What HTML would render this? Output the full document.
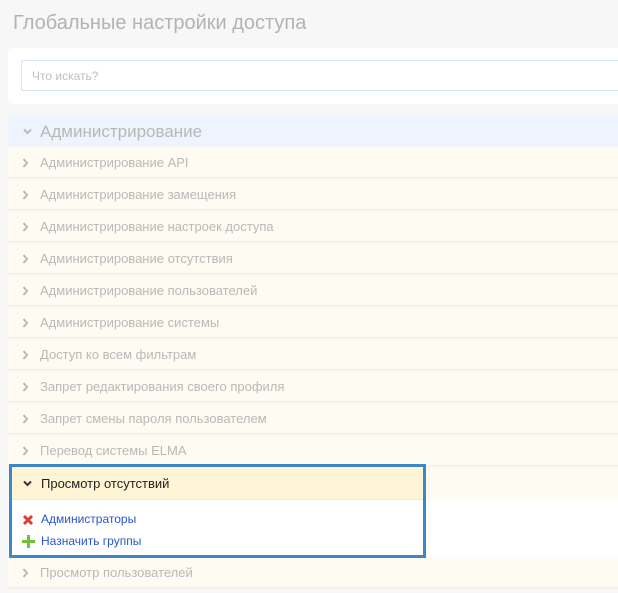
<!DOCTYPE html>
<html><head><meta charset="utf-8"><style>
body{margin:0;width:618px;height:593px;overflow:hidden;background:#f7f7f7;font-family:"Liberation Sans",sans-serif;position:relative}
.t{position:absolute;left:13px;top:12px;font-size:20px;color:#b3b3b3}
.panel{position:absolute;left:8px;top:48px;width:620px;height:56px;background:#fff;border-radius:4px}
.inp{position:absolute;left:21px;top:60px;width:610px;height:31px;border:1px solid #d6e6f5;border-radius:2px;background:#fff;font-size:12px;color:#c0c0c0;line-height:31px;padding-left:10px;box-sizing:border-box}
.hd{position:absolute;left:8px;top:115px;width:620px;height:31px;background:#edf4fd;font-size:17px;color:#b8b8b8;line-height:33px}
.row{position:absolute;left:8px;width:620px;height:30px;background:#fefbf2;border-bottom:2px solid #f4f2ec;font-size:13px;color:#b9b9b9;line-height:32px}
.row span,.hd span{position:absolute;left:32px}
.ch{position:absolute;left:14px;top:0;font-size:11px;color:#bbb}
.box{position:absolute;left:9px;top:464px;width:411px;height:88px;border:3px solid #3c87c6;background:#fff}
.bh{height:32px;background:#fff4d6;line-height:34px;font-size:13px;color:#222;position:relative}
.lk{position:absolute;left:29px;font-size:12px;color:#2a55c8}
</style></head><body>
<div class="t">Глобальные настройки доступа</div>
<div class="panel"></div>
<div class="inp">Что искать?</div>
<div class="hd"><svg style="position:absolute;left:15px;top:13px" width="9" height="7"><path d="M1 1.5L4.5 5L8 1.5" stroke="#bbb" stroke-width="2" fill="none"/></svg><span>Администрирование</span></div>
<div class="row" style="top:147px"><svg class="ch" style="top:11px" width="7" height="10"><path d="M1.5 1L5 5L1.5 9" stroke="#bbb" stroke-width="2" fill="none"/></svg><span>Администрирование API</span></div>
<div class="row" style="top:179px"><svg class="ch" style="top:11px" width="7" height="10"><path d="M1.5 1L5 5L1.5 9" stroke="#bbb" stroke-width="2" fill="none"/></svg><span>Администрирование замещения</span></div>
<div class="row" style="top:211px"><svg class="ch" style="top:11px" width="7" height="10"><path d="M1.5 1L5 5L1.5 9" stroke="#bbb" stroke-width="2" fill="none"/></svg><span>Администрирование настроек доступа</span></div>
<div class="row" style="top:243px"><svg class="ch" style="top:11px" width="7" height="10"><path d="M1.5 1L5 5L1.5 9" stroke="#bbb" stroke-width="2" fill="none"/></svg><span>Администрирование отсутствия</span></div>
<div class="row" style="top:275px"><svg class="ch" style="top:11px" width="7" height="10"><path d="M1.5 1L5 5L1.5 9" stroke="#bbb" stroke-width="2" fill="none"/></svg><span>Администрирование пользователей</span></div>
<div class="row" style="top:307px"><svg class="ch" style="top:11px" width="7" height="10"><path d="M1.5 1L5 5L1.5 9" stroke="#bbb" stroke-width="2" fill="none"/></svg><span>Администрирование системы</span></div>
<div class="row" style="top:339px"><svg class="ch" style="top:11px" width="7" height="10"><path d="M1.5 1L5 5L1.5 9" stroke="#bbb" stroke-width="2" fill="none"/></svg><span>Доступ ко всем фильтрам</span></div>
<div class="row" style="top:371px"><svg class="ch" style="top:11px" width="7" height="10"><path d="M1.5 1L5 5L1.5 9" stroke="#bbb" stroke-width="2" fill="none"/></svg><span>Запрет редактирования своего профиля</span></div>
<div class="row" style="top:403px"><svg class="ch" style="top:11px" width="7" height="10"><path d="M1.5 1L5 5L1.5 9" stroke="#bbb" stroke-width="2" fill="none"/></svg><span>Запрет смены пароля пользователем</span></div>
<div class="row" style="top:435px"><svg class="ch" style="top:11px" width="7" height="10"><path d="M1.5 1L5 5L1.5 9" stroke="#bbb" stroke-width="2" fill="none"/></svg><span>Перевод системы ELMA</span></div>
<div style="position:absolute;left:8px;top:467px;width:620px;height:32px;background:#fefbf2"></div>
<div style="position:absolute;left:8px;top:499px;width:620px;height:58px;background:#fff"></div>
<div class="row" style="top:557px"><svg class="ch" style="top:11px" width="7" height="10"><path d="M1.5 1L5 5L1.5 9" stroke="#bbb" stroke-width="2" fill="none"/></svg><span>Просмотр пользователей</span></div>
<div class="box">
<div class="bh"><svg style="position:absolute;left:11px;top:13px" width="9" height="7"><path d="M1 1.5L4.5 5L8 1.5" stroke="#333" stroke-width="2" fill="none"/></svg><span style="position:absolute;left:29px">Просмотр отсутствий</span></div>
<div style="height:1px;background:#f1ead6"></div>
<svg style="position:absolute;left:10px;top:47px" width="12" height="12"><path d="M2 2L10 10M10 2L2 10" stroke="#e0392d" stroke-width="3"/></svg>
<div class="lk" style="top:45px">Администраторы</div>
<svg style="position:absolute;left:10px;top:68px" width="13" height="13"><path d="M6.5 0V13M0 6.5H13" stroke="#6fbf3a" stroke-width="3"/></svg>
<div class="lk" style="top:67px">Назначить группы</div>
</div>
</body></html>
